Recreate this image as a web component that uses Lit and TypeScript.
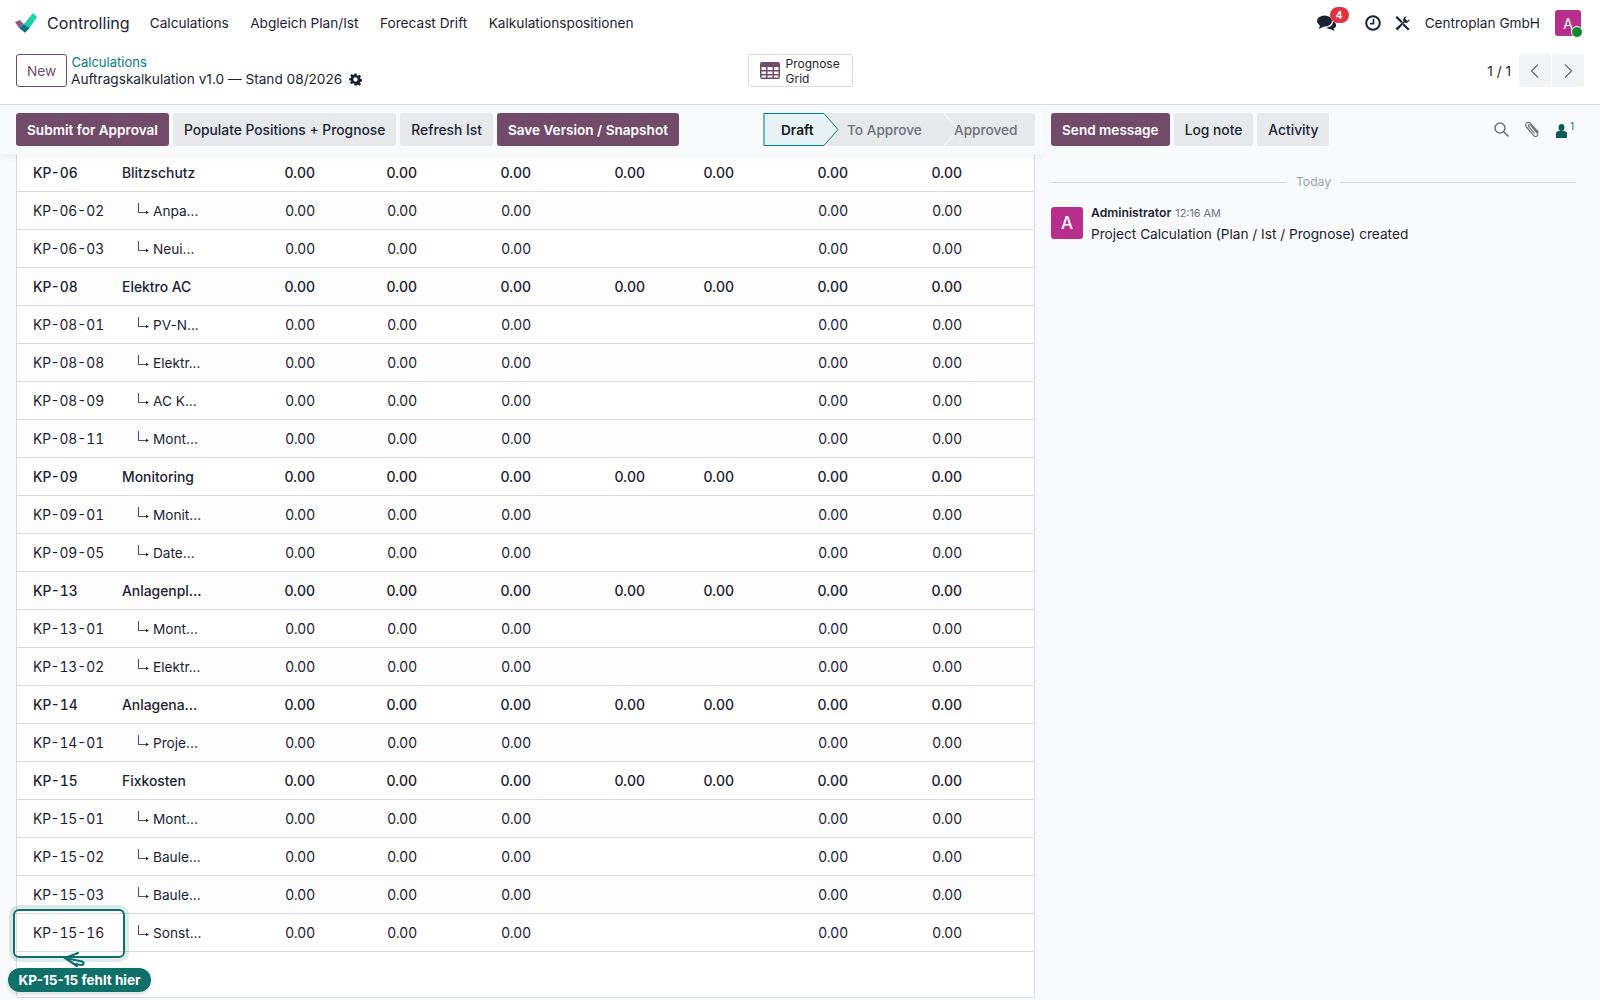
import { LitElement, css, html, svg } from 'lit'
import { customElement } from 'lit/decorators.js'

type Row = { code: string; name: string; child?: boolean }

const rows: Row[] = [
  { code: 'KP-06', name: 'Blitzschutz' },
  { code: 'KP-06-02', name: 'Anpa...', child: true },
  { code: 'KP-06-03', name: 'Neui...', child: true },
  { code: 'KP-08', name: 'Elektro AC' },
  { code: 'KP-08-01', name: 'PV-N...', child: true },
  { code: 'KP-08-08', name: 'Elektr...', child: true },
  { code: 'KP-08-09', name: 'AC K...', child: true },
  { code: 'KP-08-11', name: 'Mont...', child: true },
  { code: 'KP-09', name: 'Monitoring' },
  { code: 'KP-09-01', name: 'Monit...', child: true },
  { code: 'KP-09-05', name: 'Date...', child: true },
  { code: 'KP-13', name: 'Anlagenpl...' },
  { code: 'KP-13-01', name: 'Mont...', child: true },
  { code: 'KP-13-02', name: 'Elektr...', child: true },
  { code: 'KP-14', name: 'Anlagena...' },
  { code: 'KP-14-01', name: 'Proje...', child: true },
  { code: 'KP-15', name: 'Fixkosten' },
  { code: 'KP-15-01', name: 'Mont...', child: true },
  { code: 'KP-15-02', name: 'Baule...', child: true },
  { code: 'KP-15-03', name: 'Baule...', child: true },
  { code: 'KP-15-16', name: 'Sonst...', child: true },
]

const subArrow = svg`<svg class="sub" width="12" height="12" viewBox="0 0 12 12" fill="none">
  <path d="M1.5 0V9.5H10" stroke="#4b5563" stroke-width="1.1"/>
  <path d="M9 7.8L11.8 9.5L9 11.2Z" fill="#1b2333"/>
</svg>`

@customElement('app-root')
export class AppRoot extends LitElement {
  static styles = css`
    :host {
      display: block;
      width: 1600px;
      height: 1000px;
      overflow: hidden;
      position: relative;
      background: #fff;
      font-family: Inter, 'Liberation Sans', sans-serif;
      font-size: 13.65px;
      color: #1b2333;
    }

    .nav {
      height: 46px;
      display: flex;
      align-items: center;
      padding-left: 15px;
    }
    .logo { margin-right: 10px; }
    .brand { font-size: 16.1px; margin-right: 20px; }
    .menu { margin-right: 21.5px; }
    .nav-right {
      margin-left: auto;
      display: flex;
      align-items: center;
      padding-right: 19px;
    }
    .chat { position: relative; width: 18px; height: 18px; margin-right: 30px; }
    .badge {
      position: absolute;
      left: 13px;
      top: -7px;
      width: 19px;
      height: 16px;
      border-radius: 8px;
      background: #e2323f;
      color: #fff;
      font-size: 10px;
      font-weight: 700;
      display: flex;
      align-items: center;
      justify-content: center;
    }
    .clock { margin-right: 14px; }
    .company { margin: 0 15px 0 15px; }
    .avatar {
      position: relative;
      width: 26px;
      height: 26px;
      border-radius: 3px;
      background: #b72f8d;
      color: #fff;
      font-size: 14px;
      display: flex;
      align-items: center;
      justify-content: center;
    }
    .dot {
      position: absolute;
      right: -2px;
      bottom: -2px;
      width: 10px;
      height: 10px;
      border-radius: 50%;
      background: #0b8a2a;
      border: 1px solid #fff;
    }

    .panel {
      height: 59px;
      box-sizing: border-box;
      border-bottom: 1px solid #d8dadd;
      display: grid;
      grid-template-columns: 1fr auto 1fr;
      align-items: start;
      padding: 8px 16px 0;
    }
    .panel-left { display: flex; gap: 4px; }
    .new {
      width: 51px;
      height: 33px;
      box-sizing: border-box;
      border: 1px solid #714b67;
      border-radius: 3px;
      color: #714b67;
      display: flex;
      align-items: center;
      justify-content: center;
    }
    .crumbs { line-height: 16px; }
    .crumbs a { color: #017e84; font-size: 13px; display: block; margin: 0 0 1px 0.5px; }
    .title { display: flex; align-items: center; gap: 7px; }
    .grid-btn {
      width: 105px;
      height: 33px;
      box-sizing: border-box;
      border: 1px solid #d8dadd;
      border-radius: 3px;
      display: flex;
      align-items: center;
      gap: 6px;
      padding-left: 11px;
      font-size: 12px;
      line-height: 15px;
    }
    .pager {
      display: flex;
      justify-content: flex-end;
      align-items: center;
      height: 33px;
    }
    .pager span { margin-right: 7px; }
    .pg {
      width: 32px;
      height: 33px;
      background: #f3f4f6;
      display: flex;
      align-items: center;
      justify-content: center;
      margin-left: 1px;
    }
    .pg.l { border-radius: 3px 0 0 3px; }
    .pg.r { border-radius: 0 3px 3px 0; }

    .body {
      display: grid;
      grid-template-columns: 1035px 1fr;
      height: 895px;
      background: #f9fafb;
    }
    .main { display: flex; flex-direction: column; }
    .bar {
      height: 49px;
      flex: none;
      box-sizing: border-box;
      padding: 8px 0 8px 16px;
      display: flex;
      gap: 4px;
      align-items: flex-start;
      background: #f9fafb;
    }
    .main .bar {
      position: relative;
      box-shadow: 0 4px 6px rgba(0, 0, 0, 0.04);
      width: 1043px;
      padding-right: 8px;
      z-index: 1;
    }
    .btn {
      height: 33px;
      box-sizing: border-box;
      padding: 0 11px;
      border-radius: 3px;
      display: flex;
      align-items: center;
      font-size: 13.8px;
      font-weight: 500;
      background: #e7e9ed;
      white-space: nowrap;
    }
    .btn.primary { background: #714b67; color: #fff; font-size: 13.6px; font-weight: 600; }

    .status { margin-left: auto; display: flex; height: 33px; background: #e7e9ed; border-radius: 0 3px 3px 0; }
    .step {
      position: relative;
      box-sizing: border-box;
      height: 33px;
      display: flex;
      align-items: center;
      font-weight: 500;
      color: #6b7280;
    }
    .step svg { position: absolute; left: 0; top: 0; }
    .step b { position: relative; font-weight: 600; color: #111827; }
    .step.draft { width: 75px; padding-left: 18px; }
    .step.todo { width: 107px; padding-left: 9px; }
    .step.done { width: 90px; padding-left: 9px; }
    .step.todo svg { left: auto; right: -14px; }

    .sheet {
      flex: 1;
      margin-left: 16px;
      background: #fff;
      border: 1px solid #d8dadd;
      border-top: 0;
      border-radius: 0 0 0 4px;
      margin-bottom: 2px;
      box-sizing: border-box;
    }
    .row {
      display: grid;
      grid-template-columns: 89px 116px 93px 102px 114px 114px 89px 114px 114px;
      height: 38px;
      box-sizing: border-box;
      border-bottom: 1px solid #d8dadd;
      align-items: center;
    }
    .row:nth-child(even) { background: #fcfcfd; }
    .row.parent { font-weight: 500; }
    .row.parent .name { font-size: 13.9px; }
    .code { padding-left: 16px; font-size: 13.8px; font-variant-numeric: tabular-nums; }
    .name { padding-left: 16px; white-space: nowrap; }
    .name.child { padding-left: 31px; display: flex; align-items: center; gap: 4px; }
    .sub { margin-top: -4px; flex: none; }
    .num { text-align: right; font-size: 14px; }

    .chatter { display: flex; flex-direction: column; }
    .chatter .bar { padding-left: 16px; padding-right: 24px; }
    .tools { margin-left: auto; display: flex; align-items: center; gap: 16px; height: 33px; padding-right: 2px; }
    .follow { display: flex; align-items: flex-start; color: #017e84; font-size: 10px; line-height: 10px; gap: 3px; }
    .sep {
      display: flex;
      align-items: center;
      gap: 9px;
      margin: 19px 24px 0 16px;
      color: #9ca3af;
      font-size: 12.2px;
      line-height: 18px;
    }
    .sep i { flex: 1; height: 1px; background: #d8dadd; }
    .msg { display: flex; gap: 8px; margin: 15px 24px 0 16px; }
    .msg-av {
      width: 32px;
      height: 32px;
      margin-top: 1px;
      border-radius: 3px;
      background: #b72f8d;
      color: #fff;
      font-size: 17px;
      font-weight: 500;
      display: flex;
      align-items: center;
      justify-content: center;
    }
    .msg-head { font-size: 12.2px; font-weight: 600; line-height: 14px; }
    .msg-head small { font-size: 10.8px; font-weight: 400; color: #6b7280; margin-left: 1px; }
    .msg-text { margin-top: 5px; line-height: 17px; }

    .focus {
      position: absolute;
      left: 13px;
      top: 909px;
      width: 112px;
      height: 49px;
      box-sizing: border-box;
      border: 2px solid #0f6f69;
      border-radius: 6px;
      box-shadow: 0 0 0 4px rgba(15, 111, 105, 0.14);
    }
    .arrow { position: absolute; left: 62px; top: 951px; }
    .pill {
      position: absolute;
      left: 8px;
      top: 968px;
      width: 143px;
      height: 24px;
      border-radius: 12px;
      background: #0f6f69;
      color: #fff;
      font-size: 13.5px;
      font-weight: 700;
      display: flex;
      align-items: center;
      justify-content: center;
      white-space: nowrap;
      box-shadow: 0 2px 5px rgba(0, 0, 0, 0.15);
    }
  `

  private renderRow(r: Row) {
    const parent = !r.child
    return html`<div class="row ${parent ? 'parent' : ''}">
      <div class="code">${r.code}</div>
      ${r.child
        ? html`<div class="name child">${subArrow}<span>${r.name}</span></div>`
        : html`<div class="name">${r.name}</div>`}
      <div class="num">0.00</div>
      <div class="num">0.00</div>
      <div class="num">0.00</div>
      <div class="num">${parent ? '0.00' : ''}</div>
      <div class="num">${parent ? '0.00' : ''}</div>
      <div class="num">0.00</div>
      <div class="num">0.00</div>
    </div>`
  }

  render() {
    return html`
      <div class="nav">
        <svg class="logo" width="22" height="22" viewBox="0 0 22 22">
          <path d="M18 1L22 5L13.500 17.500L8.500 12.500Z" fill="#1fd0b0"/>
          <path d="M0 10L5 8L9 12.500L4 16Z" fill="#8f5a84"/>
          <path d="M4 16L9 12.500L14.500 16L10 20.700Z" fill="#0b6f82"/>
        </svg>
        <span class="brand">Controlling</span>
        <span class="menu">Calculations</span>
        <span class="menu">Abgleich Plan/Ist</span>
        <span class="menu">Forecast Drift</span>
        <span class="menu">Kalkulationspositionen</span>
        <div class="nav-right">
          <div class="chat">
            <svg width="20" height="18" viewBox="0 0 20 18" fill="#1b2333">
              <ellipse cx="7.5" cy="7" rx="7.5" ry="5.5"/>
              <path d="M3 11L2 15L8 12Z"/>
              <path d="M16 7.5C18.5 8.5 19.5 10 19 12C18.5 13.5 17.5 14 16.5 14.5L17.5 17L13 15C11.5 15 10.5 14.5 9.5 13.5C13 13.5 16 11 16 7.5Z"/>
            </svg>
            <span class="badge">4</span>
          </div>
          <svg class="clock" width="16" height="16" viewBox="0 0 16 16" fill="none" stroke="#1b2333">
            <circle cx="8" cy="8" r="6.8" stroke-width="2"/>
            <path d="M8.5 3.8V8.6H5" stroke-width="1.6"/>
          </svg>
          <svg width="15" height="15" viewBox="0 0 15 15" fill="#1b2333">
            <path d="M0.5 1.5L2 0L7.5 5.5L6 7Z"/>
            <path d="M9 7.5L14.5 13L13 14.5L7.5 9Z"/>
            <path d="M14.5 3A3.5 3.5 0 0 1 9.5 6.5L2.5 14.5L0.5 12.5L8.5 5.5A3.5 3.5 0 0 1 12 0.5L10 2.5L12.5 5Z"/>
          </svg>
          <span class="company">Centroplan GmbH</span>
          <div class="avatar">A<span class="dot"></span></div>
        </div>
      </div>

      <div class="panel">
        <div class="panel-left">
          <div class="new">New</div>
          <div class="crumbs">
            <a>Calculations</a>
            <div class="title">
              <span>Auftragskalkulation v1.0 — Stand 08/2026</span>
              <svg width="13" height="13" viewBox="0 0 24 24" fill="#1b2333">
                <path fill-rule="evenodd" d="M10 1h4l.6 3.2 2 .9L19.4 3.2l2.8 2.8-1.9 2.8.9 2 3.2.6v4l-3.2.6-.9 2 1.9 2.8-2.8 2.8-2.8-1.9-2 .9L14 23h-4l-.6-3.2-2-.9-2.8 1.9-2.8-2.8 1.9-2.8-.9-2L0 14v-4l3.2-.6.9-2L2.2 4.600 5 1.800l2.800 1.900 2-.9zM12 8a4 4 0 1 0 0 8 4 4 0 0 0 0-8z"/>
              </svg>
            </div>
          </div>
        </div>
        <div class="grid-btn">
          <svg width="20" height="17" viewBox="0 0 20 17" fill="#714b67">
            <path fill-rule="evenodd" d="M2 0H18A2 2 0 0 1 20 2V15A2 2 0 0 1 18 17H2A2 2 0 0 1 0 15V2A2 2 0 0 1 2 0ZM1.500 5V8H6V5ZM7.500 5V8H12.500V5ZM14 5V8H18.500V5ZM1.500 9.500V12H6V9.500ZM7.500 9.500V12H12.500V9.500ZM14 9.500V12H18.500V9.500ZM1.500 13.500V15.500H6V13.500ZM7.500 13.500V15.500H12.500V13.500ZM14 13.500V15.500H18.500V13.500Z"/>
          </svg>
          <div>Prognose<br />Grid</div>
        </div>
        <div class="pager">
          <span>1 / 1</span>
          <div class="pg l">
            <svg width="10" height="16" viewBox="0 0 10 16" fill="none" stroke="#6b7280" stroke-width="1.3"><path d="M8 1.500L1.500 8L8 14.500"/></svg>
          </div>
          <div class="pg r">
            <svg width="10" height="16" viewBox="0 0 10 16" fill="none" stroke="#6b7280" stroke-width="1.3"><path d="M2 1.500L8.500 8L2 14.500"/></svg>
          </div>
        </div>
      </div>

      <div class="body">
        <div class="main">
          <div class="bar">
            <div class="btn primary">Submit for Approval</div>
            <div class="btn">Populate Positions + Prognose</div>
            <div class="btn">Refresh Ist</div>
            <div class="btn primary">Save Version / Snapshot</div>
            <div class="status">
              <div class="step draft">
                <svg width="76" height="33" viewBox="0 0 76 33">
                  <path d="M1 .5H61L75 16.500L61 32.500H1Z" fill="#e6f2f3" stroke="#017e84"/>
                </svg>
                <b>Draft</b>
              </div>
              <div class="step todo">
                To Approve
                <svg width="15" height="33" viewBox="0 0 15 33" fill="none" stroke="#fff" stroke-width="1">
                  <path d="M0 0L14 16.500L0 33"/>
                </svg>
              </div>
              <div class="step done">Approved</div>
            </div>
          </div>
          <div class="sheet">${rows.map(r => this.renderRow(r))}</div>
        </div>

        <div class="chatter">
          <div class="bar">
            <div class="btn primary">Send message</div>
            <div class="btn">Log note</div>
            <div class="btn">Activity</div>
            <div class="tools">
              <svg width="15" height="15" viewBox="0 0 15 15" fill="none" stroke="#6b7280" stroke-width="1.500">
                <circle cx="6" cy="6" r="5"/><path d="M9.700 9.700L14.500 14.500"/>
              </svg>
              <svg width="15" height="17" viewBox="0 0 15 17" fill="none" stroke="#6b7280" stroke-width="1.200">
                <path d="M13.500 11.500L6 2.800C4.600 1.200 2.700 1 1.500 2.100C.3 3.200.5 5 1.800 6.500L8.500 14.300C9.500 15.500 11 15.800 12 15C13 14.100 12.800 12.700 11.800 11.500L5.500 4.300C5 3.700 4.200 3.500 3.700 4C3.200 4.500 3.300 5.200 3.800 5.800L9.500 12.300"/>
              </svg>
              <div class="follow">
                <svg width="11" height="14" viewBox="0 0 11 14" fill="#0b5a5e" style="margin-top:3px">
                  <ellipse cx="5.500" cy="3.500" rx="3" ry="3.500"/>
                  <path d="M0 14V9.500C0 8 1.500 7 3 7H8C9.500 7 11 8 11 9.500V14Z"/>
                </svg>
                <span>1</span>
              </div>
            </div>
          </div>
          <div class="sep"><i></i>Today<i></i></div>
          <div class="msg">
            <div class="msg-av">A</div>
            <div>
              <div class="msg-head">Administrator <small>12:16 AM</small></div>
              <div class="msg-text">Project Calculation (Plan / Ist / Prognose) created</div>
            </div>
          </div>
        </div>
      </div>

      <div class="focus"></div>
      <svg class="arrow" width="26" height="18" viewBox="0 0 26 18" fill="none" stroke="#0f6f69" stroke-width="2.200" stroke-linecap="round">
        <path d="M16 2L3 7L15 15"/>
        <path d="M3 7L20 10.500C22.500 11.500 22 14 19 14L14 13"/>
      </svg>
      <div class="pill">KP-15-15 fehlt hier</div>
    `
  }
}

declare global {
  interface HTMLElementTagNameMap {
    'app-root': AppRoot
  }
}
